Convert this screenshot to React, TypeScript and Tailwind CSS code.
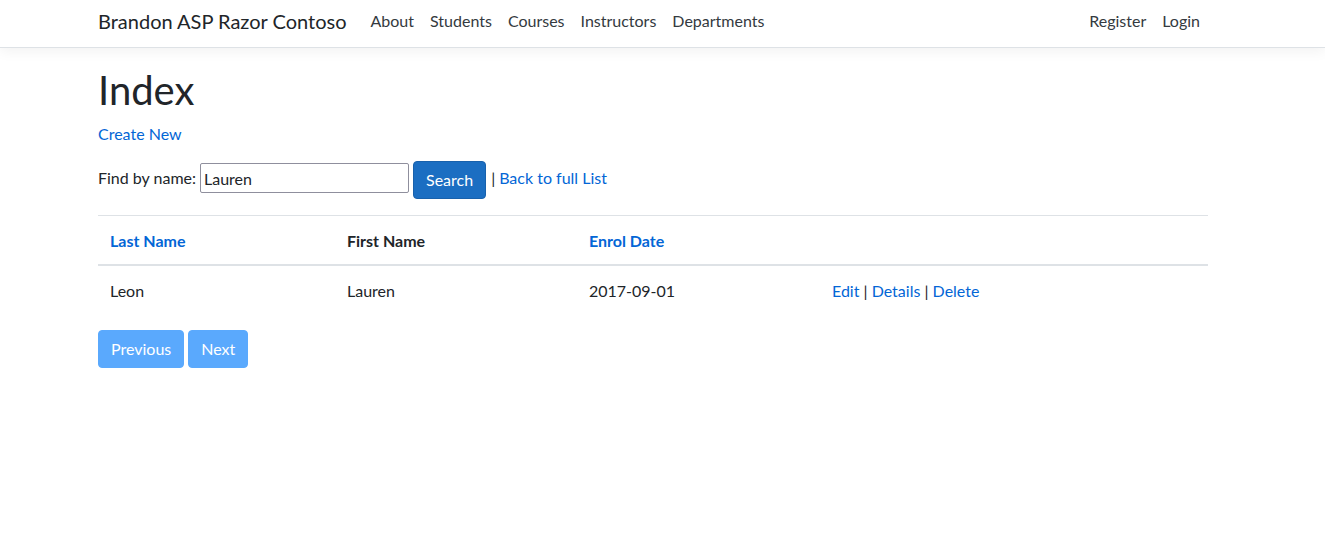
import React from "react";

const font = { fontFamily: 'Lato, "Open Sans", sans-serif' };

export default function App() {
  return (
    <div className="min-h-[537px] bg-white text-[#212529] text-[16px] leading-[1.5]" style={font}>
      <header>
        <nav className="bg-white border-b border-[#dee2e6] shadow-[0_4px_12px_rgba(0,0,0,0.05)] h-[48px]">
          <div className="w-[1140px] ml-[83px] px-[15px] flex items-start">
            <a className="text-[20px] leading-[30px] pt-[6px] text-[#212529] mr-4">Brandon ASP Razor Contoso</a>
            <ul className="flex flex-1">
              {["About", "Students", "Courses", "Instructors", "Departments"].map((t) => (
                <li key={t}>
                  <a className="block px-2 pt-[9px] text-[#343a40] leading-[24px]">{t}</a>
                </li>
              ))}
            </ul>
            <ul className="flex">
              {["Register", "Login"].map((t) => (
                <li key={t}>
                  <a className="block px-2 pt-[9px] text-[#343a40] leading-[24px]">{t}</a>
                </li>
              ))}
            </ul>
          </div>
        </nav>
      </header>
      <main className="w-[1140px] ml-[83px] px-[15px] pt-[18px] pb-4">
        <h1 className="text-[40px] font-normal leading-[48px] mb-2">Index</h1>
        <p className="mb-[14px]">
          <a className="text-[#0366d6]">Create New</a>
        </p>
        <form className="mb-4 flex items-start h-[39px]">
          <span className="mt-[6px]">Find by name:</span>
          <input
            defaultValue="Lauren"
            className="ml-1 mt-[3px] w-[209px] h-[30px] border border-[#8f8f9d] px-[3px] py-[1px] text-[16px] leading-[24px] rounded-[2px] outline-none"
            style={font}
          />
          <button
            type="button"
            className="ml-1 mt-[1px] h-[38px] px-3 bg-[#1b6ec2] border border-[#1861ac] text-white rounded-[4px] leading-[24px]"
          >
            Search
          </button>
          <span className="ml-[5px] mt-[6px]">|</span>
          <a className="ml-1 mt-[6px] text-[#0366d6]">Back to full List</a>
        </form>
        <table className="w-full border-collapse mb-4">
          <thead>
            <tr>
              <th className="text-left font-bold px-3 pt-[13px] pb-[11px] border-t border-[#dee2e6] border-b-2 w-[237px]">
                <a className="text-[#0366d6]">Last Name</a>
              </th>
              <th className="text-left font-bold px-3 pt-[13px] pb-[11px] border-t border-[#dee2e6] border-b-2 w-[242px]">First Name</th>
              <th className="text-left font-bold px-3 pt-[13px] pb-[11px] border-t border-[#dee2e6] border-b-2 w-[243px]">
                <a className="text-[#0366d6]">Enrol Date</a>
              </th>
              <th className="px-3 pt-[13px] pb-[11px] border-t border-[#dee2e6] border-b-2"></th>
            </tr>
          </thead>
          <tbody>
            <tr>
              <td className="px-3 pt-[13px] pb-[11px]">Leon</td>
              <td className="px-3 pt-[13px] pb-[11px]">Lauren</td>
              <td className="px-3 pt-[13px] pb-[11px]">2017-09-01</td>
              <td className="px-3 pt-[13px] pb-[11px]">
                <a className="text-[#0366d6]">Edit</a> |{" "}
                <a className="text-[#0366d6]">Details</a> |{" "}
                <a className="text-[#0366d6]">Delete</a>
              </td>
            </tr>
          </tbody>
        </table>
        <div className="flex gap-1">
          <a className="inline-block h-[38px] px-3 py-[6px] leading-[24px] rounded-[4px] bg-[#5aa9fd] border border-[#5aa9fd] text-white">Previous</a>
          <a className="inline-block h-[38px] px-3 py-[6px] leading-[24px] rounded-[4px] bg-[#5aa9fd] border border-[#5aa9fd] text-white">Next</a>
        </div>
      </main>
    </div>
  );
}
